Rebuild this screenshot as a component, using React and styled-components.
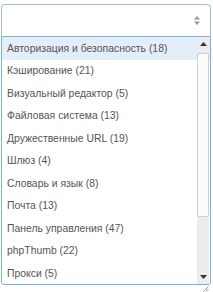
import React from 'react'
import styled, { createGlobalStyle } from 'styled-components'

const GlobalStyle = createGlobalStyle`
  html, body {
    margin: 0;
    padding: 0;
    background: #ffffff;
  }
`

const items = [
  'Авторизация и безопасность (18)',
  'Кэширование (21)',
  'Визуальный редактор (5)',
  'Файловая система (13)',
  'Дружественные URL (19)',
  'Шлюз (4)',
  'Словарь и язык (8)',
  'Почта (13)',
  'Панель управления (47)',
  'phpThumb (22)',
  'Прокси (5)',
]

function App() {
  return (
    <Page>
      <GlobalStyle />
      <Select>
        <svg width="8" height="11" viewBox="0 0 8 11">
          <path d="M4 1 L7 4.5 L1 4.5 Z" fill="#999" />
          <path d="M4 10 L7 6.5 L1 6.5 Z" fill="#999" />
        </svg>
      </Select>
      <Dropdown>
        <List>
          {items.map((item, i) => (
            <Option key={item} active={i === 0}>{item}</Option>
          ))}
        </List>
        <Scrollbar>
          <Arrow>
            <svg width="7" height="4" viewBox="0 0 7 4"><path d="M3.5 0 L7 4 L0 4 Z" fill="#333" /></svg>
          </Arrow>
          <Track>
            <Thumb />
          </Track>
          <Arrow>
            <svg width="7" height="4" viewBox="0 0 7 4"><path d="M3.5 4 L7 0 L0 0 Z" fill="#333" /></svg>
          </Arrow>
        </Scrollbar>
      </Dropdown>
      <GripRow>
        <svg width="6" height="6" viewBox="0 0 6 6">
          <path d="M5.5 0.5 L0.5 5.5 M5.5 3 L3 5.5" stroke="#999" strokeWidth="1" />
        </svg>
      </GripRow>
    </Page>
  )
}

export default App

const Page = styled.div`
  padding: 4px 2px 0 1px;
  width: 213px;
  box-sizing: border-box;
  font-family: "Liberation Sans", Arial, sans-serif;
`

const Select = styled.div`
  height: 31px;
  border: 1px solid #a8bfd3;
  border-bottom: none;
  border-radius: 4px 4px 0 0;
  display: flex;
  justify-content: flex-end;
  align-items: center;
  padding-right: 9px;
  box-sizing: content-box;
`

const Dropdown = styled.div`
  display: flex;
  border: 1px solid #7db1dd;
  border-radius: 0 0 3px 3px;
  height: 247px;
  overflow: hidden;
`

const List = styled.div`
  flex: 1;
  display: flex;
  flex-direction: column;
  margin-right: -13px;
`

const Option = styled.div`
  height: 22.5px;
  flex-shrink: 0;
  display: flex;
  align-items: center;
  padding-left: 5px;
  font-size: 10.4px;
  color: #555555;
  white-space: nowrap;
  background: ${({ active }) => (active ? '#e4eef9' : 'transparent')};
`

const Scrollbar = styled.div`
  position: relative;
  z-index: 1;
  width: 12px;
  margin-right: 1px;
  background: #ececec;
  display: flex;
  flex-direction: column;
`

const Arrow = styled.div`
  height: 14px;
  display: flex;
  align-items: center;
  justify-content: center;
`

const Track = styled.div`
  flex: 1;
  padding-top: 2px;
`

const Thumb = styled.div`
  height: 164px;
  background: #fcfcfc;
  border: 1px solid #cfcfcf;
  border-radius: 2px;
  box-sizing: border-box;
`

const GripRow = styled.div`
  display: flex;
  justify-content: flex-end;
  padding: 1px 2px 0 0;
`
